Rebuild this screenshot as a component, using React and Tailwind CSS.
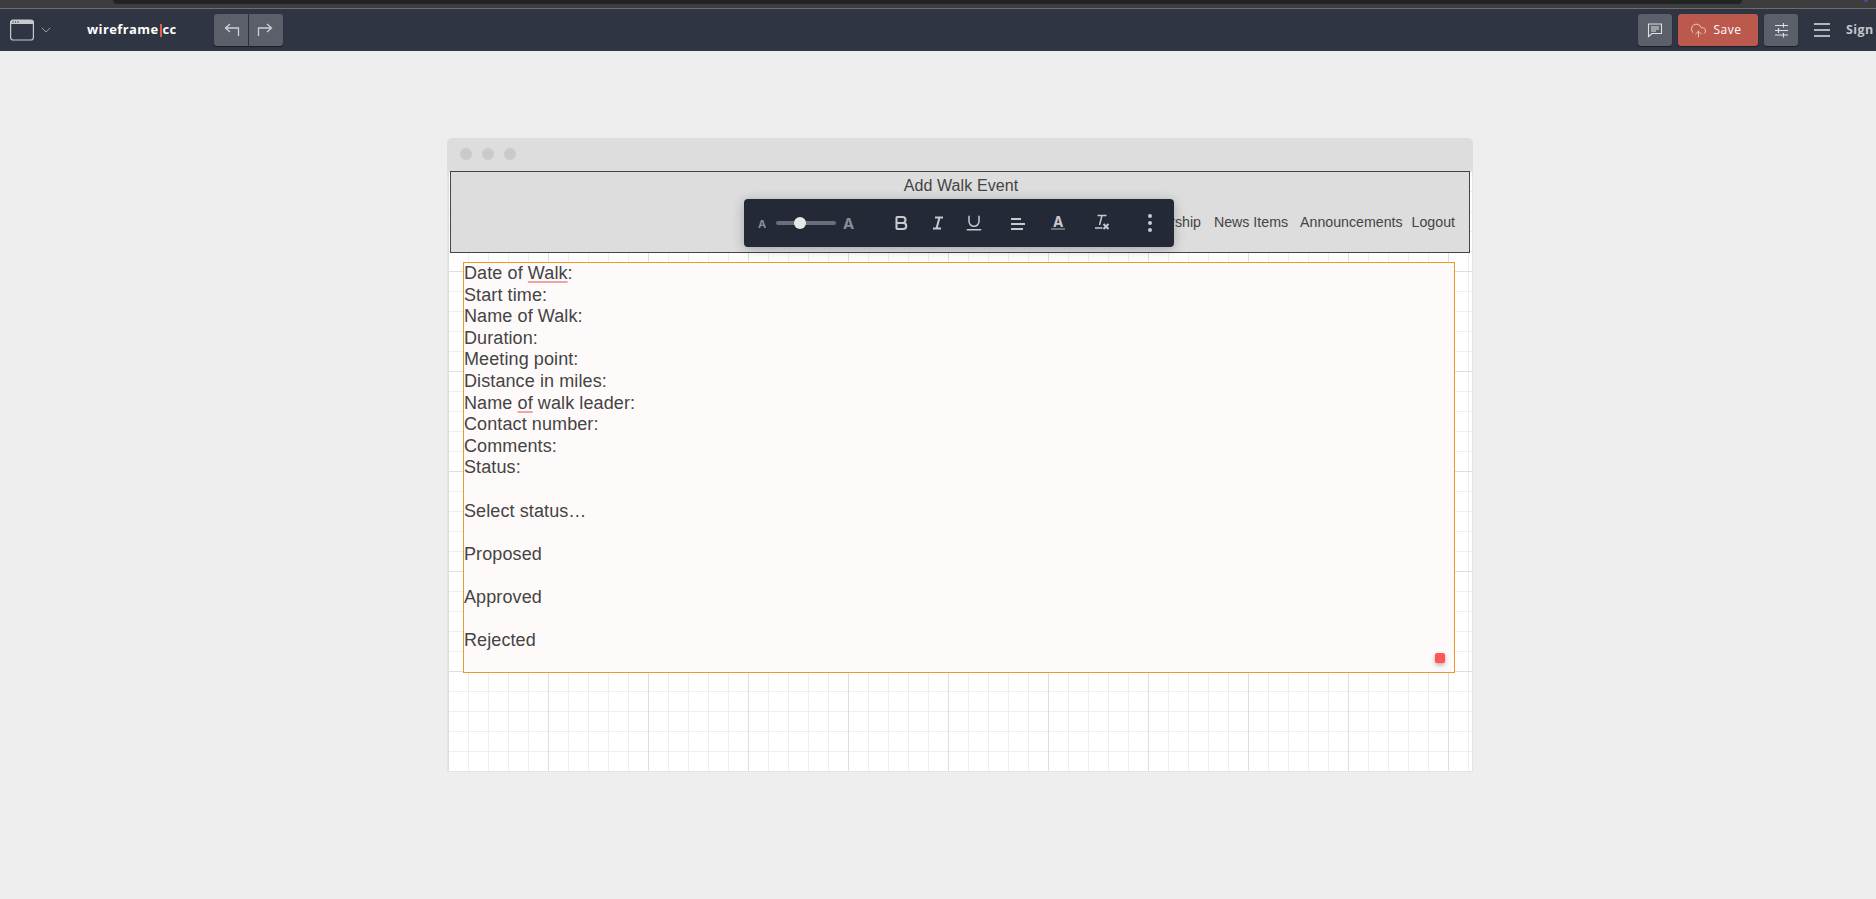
import React from "react";
import { CloudUpload, ChevronDown, Bold, Underline } from "lucide-react";

const lines = ["Date of ", "Start time:", "Name of Walk:", "Duration:", "Meeting point:", "Distance in miles:", "Name ", "Contact number:", "Comments:", "Status:", "\u00a0", "Select status\u2026", "\u00a0", "Proposed", "\u00a0", "Approved", "\u00a0", "Rejected"];

function Line({ t }) {
  if (t === "Date of ") return <div>Date of <span className="underline decoration-[#f2a3a3] decoration-2 underline-offset-2">Walk</span>:</div>;
  if (t === "Name ") return <div>Name <span className="underline decoration-[#f2a3a3] decoration-2 underline-offset-2">of</span> walk leader:</div>;
  return <div>{t}</div>;
}

function IconBtn({ children, className = "" }) {
  return <div className={"w-[34px] h-8 flex items-center justify-center bg-[#5a5f69] shadow-[0_1px_1px_rgba(0,0,0,0.45)] " + className}>{children}</div>;
}

export default function App() {
  return (
    <div className="w-[1876px] h-[899px] bg-[#eeeeee] flex flex-col overflow-hidden font-['Liberation_Sans',sans-serif]">
      <div className="h-[9px] shrink-0 bg-[#3d3d3d] border-b border-[#6e6e6e] relative">
        <div className="absolute left-[113px] w-[1629px] top-0 h-1 bg-[#212325] rounded-b-md" />
        <div className="absolute left-[1864px] top-0 w-1 h-[2px] rounded-b-full bg-[#6a3fb5]" />
      </div>
      <header className="h-[42px] bg-[#2f3542] flex items-center shrink-0 font-['Open_Sans',sans-serif]">
        <svg width="26" height="22" viewBox="0 0 26 22" className="ml-[9px]" fill="none">
          <rect x="1.6" y="1" width="22.8" height="20" rx="2.5" stroke="#c8c9cc" strokeWidth="1.2" />
          <path d="M1.6 5h22.8V3.5A2.5 2.5 0 0 0 21.9 1H4.1A2.5 2.5 0 0 0 1.6 3.5z" fill="#c8c9cc" />
          <circle cx="4" cy="3" r=".7" fill="#2f3542" /><circle cx="6.5" cy="3" r=".7" fill="#2f3542" /><circle cx="9" cy="3" r=".7" fill="#2f3542" />
        </svg>
        <ChevronDown size={16} strokeWidth={1.3} className="text-[#a9acb2] ml-[3px]" />
        <div className="ml-[33px] w-[89px] text-[13px] font-bold text-white tracking-[0.4px] flex items-center whitespace-nowrap">
          <span>wireframe</span><span className="shrink-0 w-[2px] h-[13px] bg-[#e2603f] mx-px" /><span>cc</span>
        </div>
        <div className="ml-[38px] flex gap-px">
          <IconBtn className="rounded-l-[3px]">
            <svg width="34" height="32" viewBox="0 0 34 32" fill="none" stroke="#cfd0d3" strokeWidth="1.3"><path d="M16 10l-4.500 4 4.500 4M11.500 14H24.500V22" /></svg>
          </IconBtn>
          <IconBtn className="rounded-r-[3px]">
            <svg width="34" height="32" viewBox="0 0 34 32" fill="none" stroke="#cfd0d3" strokeWidth="1.3"><path d="M18 10l4.500 4-4.500 4M22.500 14H9.500V22" /></svg>
          </IconBtn>
        </div>
        <div className="ml-auto flex items-center">
          <IconBtn className="rounded-[3px]">
            <svg width="16" height="15" viewBox="0 0 16 15" fill="none" stroke="#dfe0e2" strokeWidth="1.1"><path d="M1.500 1H14.500V10.500H5L1.500 13.500zM4 4H12M4 6H12M4 8H9" /></svg>
          </IconBtn>
          <div className="ml-[6px] w-[80px] h-8 rounded-[3px] bg-[#bb5a4c] text-white flex items-center justify-center gap-[7px] pr-[5px] text-[12px] tracking-[0.5px] shadow-[0_1px_1px_rgba(0,0,0,0.45)]">
            <CloudUpload size={17} strokeWidth={1.2} className="text-[#f0d9d4]" />Save
          </div>
          <IconBtn className="ml-[6px] rounded-[3px]">
            <svg width="15" height="16" viewBox="0 0 15 16" fill="none" stroke="#dfe0e2" strokeWidth="1.1"><path d="M1 3.500H14M1 8.500H14M1 13H14M9.500 1V5.500M4.500 6V11M9.500 11V15.500" /></svg>
          </IconBtn>
          <svg width="16" height="14" viewBox="0 0 16 14" className="ml-4" fill="none" stroke="#dfe0e2" strokeWidth="1.3"><path d="M0 1H16M0 7H16M0 13H16" /></svg>
          <div className="ml-4 w-[30px] overflow-hidden text-[12.5px] font-bold tracking-[0.4px] text-[#c4c6c9]">Sign</div>
        </div>
      </header>
      <main className="relative flex-1">
        <div className="absolute left-[447px] top-[87px] w-[1026px] h-[634px] rounded-t-[5px] overflow-hidden">
          <div className="h-[33px] bg-[#dddddd] flex items-center gap-[10px] pl-[13px] pb-px">
            <span className="w-3 h-3 rounded-full bg-[#cacaca]" />
            <span className="w-3 h-3 rounded-full bg-[#cacaca]" />
            <span className="w-3 h-3 rounded-full bg-[#cacaca]" />
          </div>
          <div className="relative h-[601px] border-x border-b border-[#e3e3e3] bg-white bg-[linear-gradient(to_right,#dedede_1px,transparent_1px),linear-gradient(to_bottom,#dedede_1px,transparent_1px),linear-gradient(to_right,#eeeeee_1px,transparent_1px),linear-gradient(to_bottom,#eeeeee_1px,transparent_1px)] bg-[size:100px_100px,100px_100px,20px_20px,20px_20px]">
            <div className="absolute left-[2px] top-0 w-[1020px] h-[82px] bg-[#dddddd] border border-[#444444] text-[#444444] text-center">
              <div className="text-[16px] leading-[18px] mt-[5px] pl-[2px] tracking-[0.1px]">Add Walk Event</div>
              <div className="absolute right-[14px] top-[42px] text-[14.2px] leading-[17px] whitespace-nowrap flex">
                <span className="mr-[13px]">Membership</span>
                <span className="mr-[12px]">News Items</span>
                <span className="mr-[9px]">Announcements</span>
                <span>Logout</span>
              </div>
            </div>
            <div className="absolute left-[15px] top-[91px] w-[992px] h-[411px] bg-[#fffafa] border border-[#f0962a] text-[18px] leading-[21.6px] text-[#444444] tracking-[0.1px]">
              {lines.map((t, i) => <Line key={i} t={t} />)}
              <div className="absolute right-[9px] bottom-[9px] w-[10px] h-[10px] rounded-[2px] bg-[#ff5555] shadow-[0_2px_4px_rgba(0,0,0,0.3)]" />
            </div>
          </div>
        </div>
        <div className="absolute left-[744px] top-[148px] w-[430px] h-[48px] rounded-[4px] bg-[#232936] shadow-[0_2px_12px_rgba(0,0,0,0.25)] text-[#c8cad0] font-['Inter',sans-serif]">
          <span className="absolute left-[14px] top-[19px] text-[11px] leading-[12px] font-bold text-[#8a8e97]">A</span>
          <div className="absolute left-[32px] top-[22px] w-[60px] h-1 rounded-full bg-[#6b6f78]" />
          <div className="absolute left-[50px] top-[18px] w-3 h-3 rounded-full bg-[#e8e8e8]" />
          <span className="absolute left-[99px] top-[17px] text-[15px] leading-[15px] font-bold text-[#8a8e97]">A</span>
          <Bold size={18} strokeWidth={2.8} className="absolute left-[148px] top-[15px]" />
          <svg width="12" height="14" viewBox="0 0 12 14" className="absolute left-[188px] top-[17px]" fill="none" stroke="#c8cad0" strokeWidth="2"><path d="M3 1.500H11M1 12.500H9M7.500 1.500L4.500 12.500" /></svg>
          <Underline size={20} strokeWidth={1.8} className="absolute left-[220px] top-[14px]" />
          <svg width="16" height="14" viewBox="0 0 16 14" className="absolute left-[266px] top-[18px]" stroke="#c8cad0" strokeWidth="2"><path d="M1 2h10M1 7h14M1 12h12" /></svg>
          <span className="absolute left-[309px] top-[16px] text-[14px] leading-[14px] font-bold">A</span>
          <div className="absolute left-[307px] top-[29px] w-[14px] h-[2px] bg-[#6b6f78]" />
          <svg width="16" height="16" viewBox="0 0 16 16" className="absolute left-[350px] top-[15px]" fill="none" stroke="#c8cad0" strokeWidth="1.5"><path d="M3.500 1.500H12.500M8 1.500L5.500 11M1 14H8.500" /><path d="M9.500 10L14.500 15M14.500 10L9.500 15" strokeWidth="2" /></svg>
          <div className="absolute left-[404px] top-[15px] flex flex-col gap-[3px]">
            <span className="w-1 h-1 rounded-full bg-[#c8cad0]" />
            <span className="w-1 h-1 rounded-full bg-[#c8cad0]" />
            <span className="w-1 h-1 rounded-full bg-[#c8cad0]" />
          </div>
        </div>
      </main>
    </div>
  );
}
